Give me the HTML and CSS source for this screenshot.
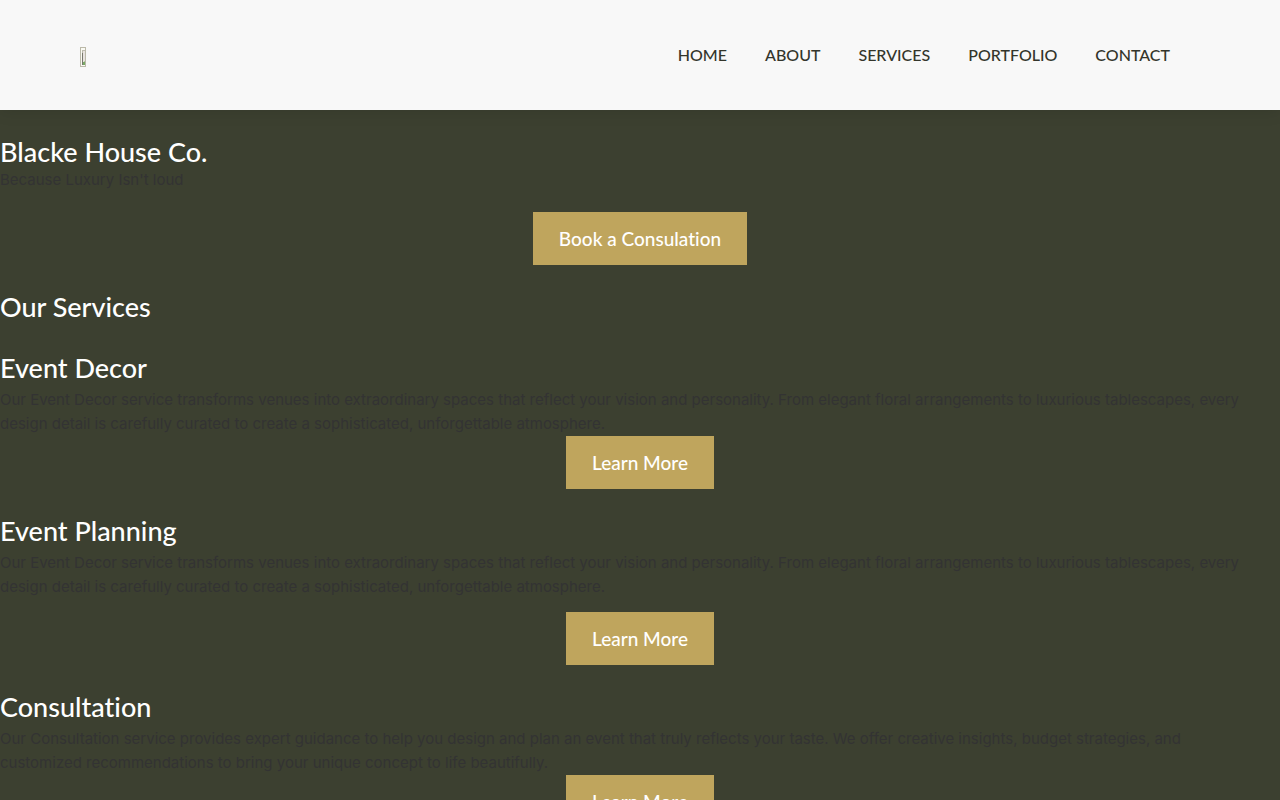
FILE: index.html
```html
<!DOCTYPE html>
<html lang="en">
<head>
<meta charset="utf-8">
<meta name="viewport" content="width=device-width, initial-scale=1">
<title>Blacke House Co.</title>
<link rel="stylesheet" href="styles.css">
</head>
<body>
<header class="site-header">
  <a class="logo" href="#" aria-label="Blacke House Co.">
    <svg width="6" height="20" viewBox="0 0 6 20" shape-rendering="crispEdges" aria-hidden="true">
      <path fill="#bbb9a9" d="M0 0h6v20H0z"/>
      <path fill="#fafaf3" d="M1 1h4v18H1z"/>
      <path fill="#bdbbae" d="M2 3h3v15H2z"/>
      <path fill="#77776d" d="M2 6h1v12H2z"/>
      <path fill="#e8e3df" d="M3 4h2v11H3z"/>
      <path fill="#79a866" d="M3 15h2v3H3z"/>
      <path fill="#b4c99f" d="M4 14h1v1H4z"/>
    </svg>
  </a>
  <nav class="nav" aria-label="Main">
    <a href="#">HOME</a>
    <a href="#">ABOUT</a>
    <a href="#">SERVICES</a>
    <a href="#">PORTFOLIO</a>
    <a href="#">CONTACT</a>
  </nav>
</header>
<main>
  <section class="block">
    <h1 class="title">Blacke House Co.</h1>
    <p>Because Luxury Isn't loud</p>
    <a class="button spaced-large" href="#">Book a Consulation</a>
  </section>
  <section class="block intro">
    <h2 class="title">Our Services</h2>
  </section>
  <section class="block service">
    <h2 class="title">Event Decor</h2>
    <p>Our Event Decor service transforms venues into extraordinary spaces that reflect your vision and personality. From elegant floral arrangements to luxurious tablescapes, every design detail is carefully curated to create a sophisticated, unforgettable atmosphere.</p>
    <a class="button" href="#">Learn More</a>
  </section>
  <section class="block service">
    <h2 class="title">Event Planning</h2>
    <p>Our Event Decor service transforms venues into extraordinary spaces that reflect your vision and personality. From elegant floral arrangements to luxurious tablescapes, every design detail is carefully curated to create a sophisticated, unforgettable atmosphere.</p>
    <a class="button spaced" href="#">Learn More</a>
  </section>
  <section class="block service">
    <h2 class="title">Consultation</h2>
    <p>Our Consultation service provides expert guidance to help you design and plan an event that truly reflects your taste. We offer creative insights, budget strategies, and customized recommendations to bring your unique concept to life beautifully.</p>
    <a class="button" href="#">Learn More</a>
  </section>
</main>
</body>
</html>
```
FILE: styles.css
```css
* {
  box-sizing: border-box;
}

body {
  margin: 0;
  background: #3c4030;
  color: #333;
  font: 15px/24px Inter, "Liberation Sans", sans-serif;
}

a {
  text-decoration: none;
}

.site-header {
  position: relative;
  display: flex;
  align-items: center;
  justify-content: space-between;
  padding: 43px 110px 43px 80px;
  background: #f8f8f8;
  box-shadow: 0 2px 15px rgba(0, 0, 0, 0.1);
}

.logo {
  display: flex;
  padding-top: 4px;
}

.nav {
  display: flex;
  gap: 38px;
  font: 500 16px/24px Lato, sans-serif;
}

.nav a {
  color: #33352b;
}

.block {
  display: flex;
  flex-direction: column;
  padding-top: 27px;
}

.intro {
  padding-bottom: 3px;
}

.title {
  margin: 0;
  color: #fff;
  font: 500 27px/30px Lato, sans-serif;
  font-variant-ligatures: no-common-ligatures;
  padding-bottom: 1px;
}

.service .title {
  padding-bottom: 5px;
}

p {
  margin: 0;
  padding-right: 24px;
}

.button {
  align-self: center;
  padding: 15px 26px;
  background: #bfa55d;
  color: #fff;
  font: 500 19px/23px Lato, sans-serif;
  font-variant-ligatures: no-common-ligatures;
}

.spaced {
  margin-top: 13px;
}

.spaced-large {
  margin-top: 20px;
}
```
